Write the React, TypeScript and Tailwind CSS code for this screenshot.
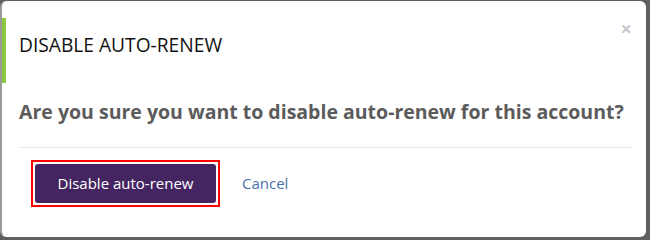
import React from "react";

export default function App() {
  return (
    <div className="w-[650px] h-[240px] bg-[#5f5f5f] pt-[1px] overflow-hidden" style={{ fontFamily: '"Open Sans", sans-serif' }}>
      <div className="relative w-[646px] h-[236px] bg-white rounded-[6px] border-l-[2px] border-[#9a9a9a]">
        <button className="absolute right-[14px] top-[18px] text-[#c8c8c8] text-[20px] leading-none font-bold">×</button>
        <div className="pt-[17px] flex">
          <div className="w-[4px] h-[65px] bg-[#8dc63f]" />
          <h2 className="ml-[13px] pt-[13px] text-[19.2px] leading-[28px] text-[#111] font-normal">DISABLE AUTO-RENEW</h2>
        </div>
        <p className="mt-[15px] ml-[17px] text-[19.5px] leading-[28px] font-bold text-[#5b5b5b]">
          Are you sure you want to disable auto-renew for this account?
        </p>
        <div className="mt-[21px] ml-[17px] mr-[14px] border-t border-[#e6e6e6]" />
        <div className="mt-[12px] ml-[29px] flex items-center">
          <div className="border-[2px] border-[#ff0000] p-[2px]">
            <button className="w-[181px] h-[39px] bg-[#442562] rounded-[3px] text-white text-[15px]">Disable auto-renew</button>
          </div>
          <button className="ml-[22px] text-[#4a72ab] text-[15px]">Cancel</button>
        </div>
      </div>
    </div>
  );
}
